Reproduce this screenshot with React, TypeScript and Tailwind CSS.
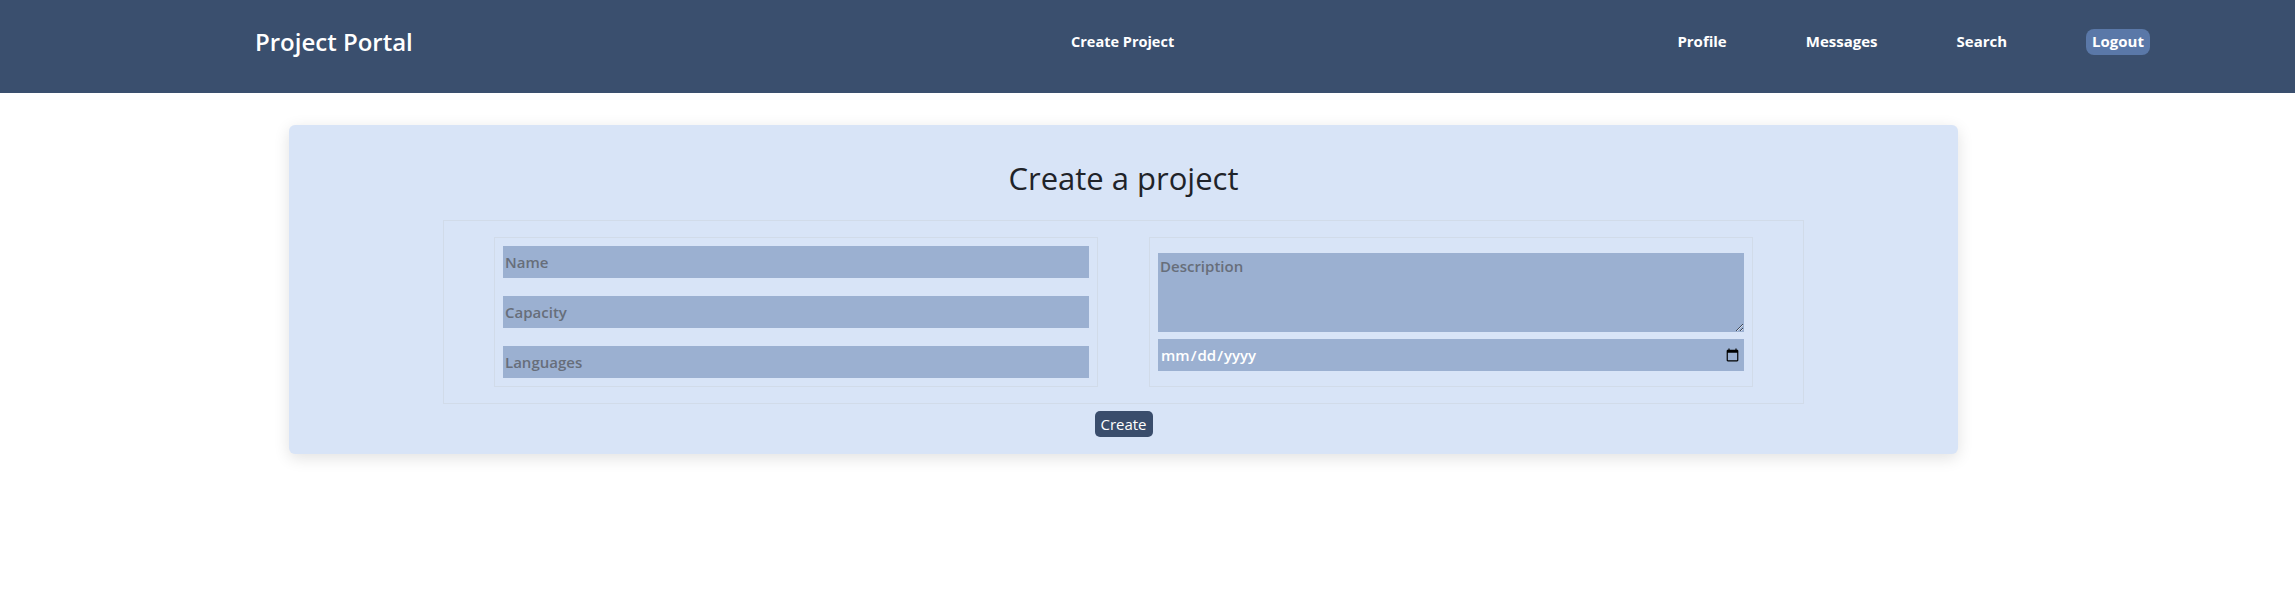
import React from "react";

export default function App() {
  return (
    <div className="w-full min-h-[599px] bg-white" style={{ fontFamily: '"Open Sans", "Noto Sans", sans-serif' }}>
      <header className="h-[93px] bg-[#3a4f6e] flex items-center pl-[255px] pr-[145px] pb-[10px] text-white">
        <div className="w-[816px] text-[24px] font-semibold leading-none">Project Portal</div>
        <a className="text-[14.5px] font-bold">Create Project</a>
        <nav className="ml-auto flex items-center gap-[79px] text-[15px] font-bold">
          <a>Profile</a>
          <a>Messages</a>
          <a>Search</a>
          <button className="bg-[#5a78a8] rounded-[8px] px-[6px] h-[26px] font-bold">Logout</button>
        </nav>
      </header>
      <div className="mt-[32px] ml-[289px] w-[1669px] bg-[#d8e4f7] rounded-[6px] shadow-[0_4px_16px_rgba(0,0,0,0.12)] pt-[31px] pb-[17px] flex flex-col items-center">
        <h1 className="text-[31px] font-medium text-[#1f2329] leading-[44px]">Create a project</h1>
        <div className="mt-[20px] w-[1361px] border border-[#d1dbe9] px-[50px] py-[16px] grid grid-cols-2 gap-[51px]">
          <div className="border border-[#d1dbe9] p-[8px] flex flex-col gap-[18px]">
            <input placeholder="Name" className="h-[32px] bg-[#9bb0d1] px-[2px] text-[15px] font-semibold placeholder:text-[#676e7a] outline-none" />
            <input placeholder="Capacity" className="h-[32px] bg-[#9bb0d1] px-[2px] text-[15px] font-semibold placeholder:text-[#676e7a] outline-none" />
            <input placeholder="Languages" className="h-[32px] bg-[#9bb0d1] px-[2px] text-[15px] font-semibold placeholder:text-[#676e7a] outline-none" />
          </div>
          <div className="border border-[#d1dbe9] px-[8px] flex flex-col justify-center">
            <textarea placeholder="Description" className="h-[79px] bg-[#9bb0d1] px-[2px] py-[2px] text-[15px] font-semibold placeholder:text-[#676e7a] outline-none" />
            <input type="date" className="mt-[7px] h-[32px] bg-[#9bb0d1] px-[2px] text-[15px] font-semibold text-white outline-none" />
          </div>
        </div>
        <button className="mt-[7px] w-[58px] h-[26px] bg-[#3a4d6c] text-white rounded-[5px] text-[15px]">Create</button>
      </div>
    </div>
  );
}
